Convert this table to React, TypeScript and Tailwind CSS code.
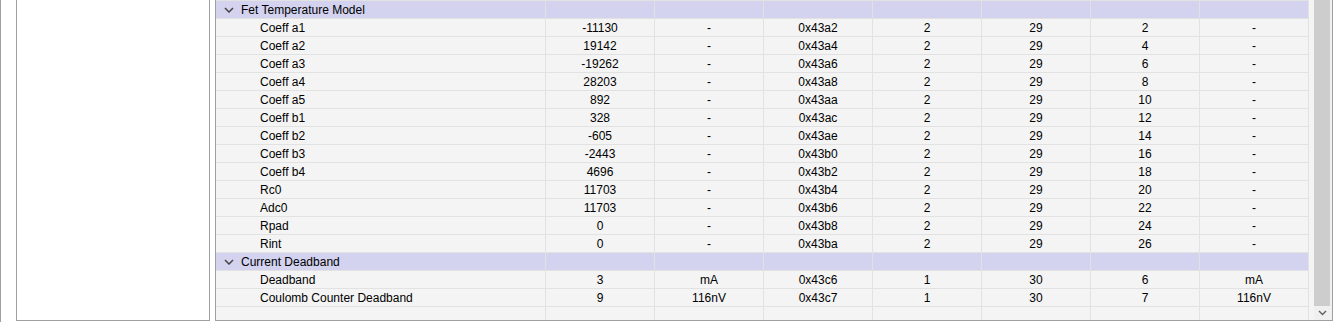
import React from "react";

type Row = { name: string; vals: string[] };
type Group = { title: string; rows: Row[] };

const groups: Group[] = [
  {
    title: "Fet Temperature Model",
    rows: [
      { name: "Coeff a1", vals: ["-11130", "-", "0x43a2", "2", "29", "2", "-"] },
      { name: "Coeff a2", vals: ["19142", "-", "0x43a4", "2", "29", "4", "-"] },
      { name: "Coeff a3", vals: ["-19262", "-", "0x43a6", "2", "29", "6", "-"] },
      { name: "Coeff a4", vals: ["28203", "-", "0x43a8", "2", "29", "8", "-"] },
      { name: "Coeff a5", vals: ["892", "-", "0x43aa", "2", "29", "10", "-"] },
      { name: "Coeff b1", vals: ["328", "-", "0x43ac", "2", "29", "12", "-"] },
      { name: "Coeff b2", vals: ["-605", "-", "0x43ae", "2", "29", "14", "-"] },
      { name: "Coeff b3", vals: ["-2443", "-", "0x43b0", "2", "29", "16", "-"] },
      { name: "Coeff b4", vals: ["4696", "-", "0x43b2", "2", "29", "18", "-"] },
      { name: "Rc0", vals: ["11703", "-", "0x43b4", "2", "29", "20", "-"] },
      { name: "Adc0", vals: ["11703", "-", "0x43b6", "2", "29", "22", "-"] },
      { name: "Rpad", vals: ["0", "-", "0x43b8", "2", "29", "24", "-"] },
      { name: "Rint", vals: ["0", "-", "0x43ba", "2", "29", "26", "-"] },
    ],
  },
  {
    title: "Current Deadband",
    rows: [
      { name: "Deadband", vals: ["3", "mA", "0x43c6", "1", "30", "6", "mA"] },
      { name: "Coulomb Counter Deadband", vals: ["9", "116nV", "0x43c7", "1", "30", "7", "116nV"] },
    ],
  },
];

const blanks = ["", "", "", "", "", "", ""];

function Chevron() {
  return (
    <svg width="10" height="6" viewBox="0 0 10 6" className="mt-px shrink-0">
      <path d="M1 1 L5 5 L9 1" fill="none" stroke="#444" strokeWidth="1.5" />
    </svg>
  );
}

function GroupRow({ title }: { title: string }) {
  return (
    <div className="flex h-[18px] border-b border-[#e2e2e2]">
      <div className="flex w-[330px] items-center border-r border-[#e2e2e2] bg-[#d3d3f0] pl-[8px]">
        <Chevron />
        <span className="ml-[7px] pt-px leading-[17px]">{title}</span>
      </div>
      {blanks.map((_, i) => (
        <div key={i} className="w-[109px] border-r border-[#e2e2e2] bg-[#d3d3f0]" />
      ))}
    </div>
  );
}

function DataRow({ name, vals }: Row) {
  return (
    <div className="flex h-[18px] border-b border-[#e2e2e2]">
      <div className="flex w-[330px] items-center border-r border-[#e2e2e2] pl-[44px] pt-px leading-[17px]">
        {name}
      </div>
      {vals.map((v, i) => (
        <div
          key={i}
          className="flex w-[109px] items-center justify-center border-r border-[#e2e2e2] pt-px leading-[17px]"
        >
          {v}
        </div>
      ))}
    </div>
  );
}

export default function App() {
  return (
    <div className="flex h-[322px] w-[1336px] overflow-hidden bg-white font-['Liberation_Sans',Arial,sans-serif] text-[12px] text-black">
      {/* outer edge */}
      <div className="w-px shrink-0 bg-[#a0a0a0]" />
      <div className="w-[15px] shrink-0" />

      {/* left tree panel */}
      <div className="h-[321px] w-[194px] shrink-0 border-x border-b border-[#a0a0a0] bg-white" />

      <div className="w-[5px] shrink-0" />

      {/* right grid panel */}
      <div className="flex h-[321px] w-[1118px] shrink-0 border-x border-b border-[#a0a0a0] bg-[#f4f4f4]">
        <div className="flex w-[1093px] flex-col border-t border-[#e2e2e2]">
          {groups.map((g) => (
            <React.Fragment key={g.title}>
              <GroupRow title={g.title} />
              {g.rows.map((r) => (
                <DataRow key={r.name} name={r.name} vals={r.vals} />
              ))}
            </React.Fragment>
          ))}
          <div className="flex flex-1">
            <div className="w-[330px] border-r border-[#e2e2e2]" />
            {blanks.map((_, i) => (
              <div key={i} className="w-[109px] border-r border-[#e2e2e2]" />
            ))}
          </div>
        </div>

        <div className="w-[5px] shrink-0 bg-[#f4f4f4]" />

        {/* scrollbar */}
        <div className="flex w-[18px] shrink-0 flex-col bg-[#f0f0f0]">
          <div className="mr-[2px] flex-1 bg-[#cdcdcd]" />
          <div className="flex h-[14px] items-center justify-center pr-[1px]">
            <svg width="9" height="6" viewBox="0 0 9 6">
              <path d="M1 1 L4.5 4.5 L8 1" fill="none" stroke="#606060" strokeWidth="1.4" />
            </svg>
          </div>
        </div>
      </div>
    </div>
  );
}
